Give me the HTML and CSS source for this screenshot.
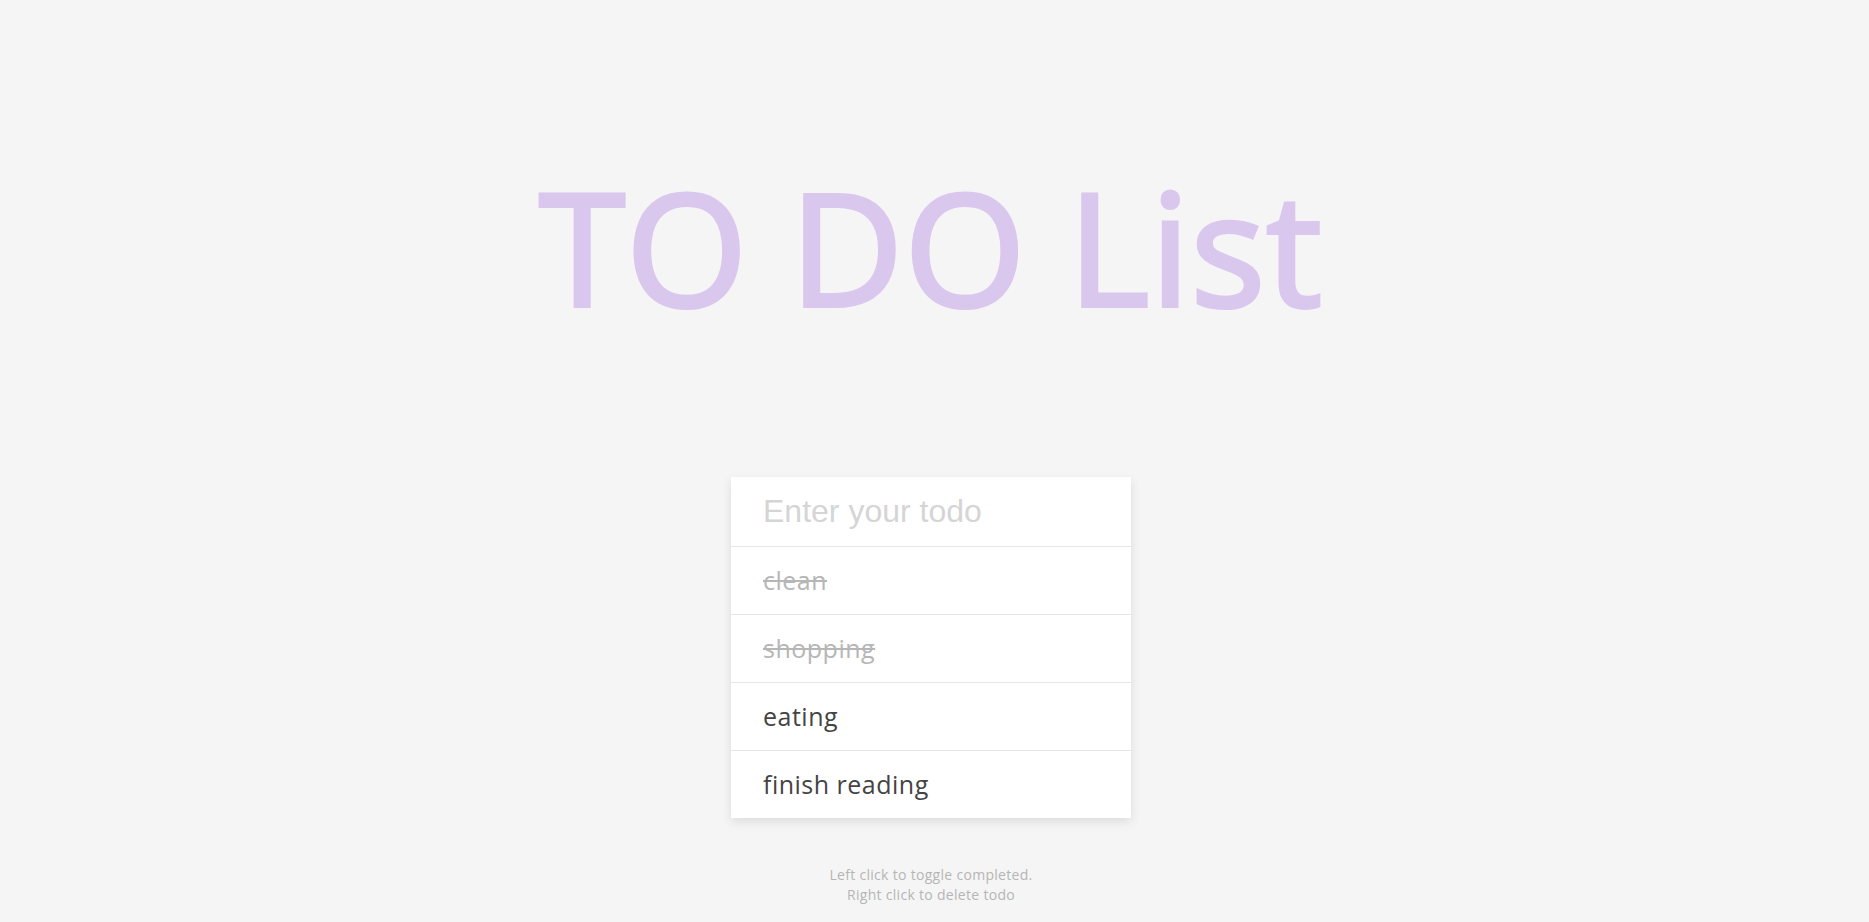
FILE: index.html
```html
<!DOCTYPE html>
<html lang="en">
<head>
<meta charset="UTF-8">
<title>TO DO List</title>
<link rel="stylesheet" href="styles.css">
</head>
<body>
  <h1 class="title">TO DO List</h1>
  <form class="todo-form">
    <input type="text" class="todo-input" placeholder="Enter your todo" autocomplete="off">
    <ul class="todos">
      <li class="todo completed">clean</li>
      <li class="todo completed">shopping</li>
      <li class="todo">eating</li>
      <li class="todo">finish reading</li>
    </ul>
  </form>
  <small class="hint">Left click to toggle completed.<br>Right click to delete todo</small>
</body>
</html>
```
FILE: styles.css
```css
* {
  box-sizing: border-box;
}

html, body {
  margin: 0;
}

body {
  background-color: #f5f5f5;
  color: #444;
  font-family: "Open Sans", "Liberation Sans", sans-serif;
  min-height: 100vh;
  display: flex;
  flex-direction: column;
  align-items: center;
  padding: 163px 7px 0 0;
}

.title {
  margin: 0;
  font-size: 156px;
  line-height: 165px;
  font-weight: 400;
  letter-spacing: 1px;
  color: rgb(179, 131, 226);
  -webkit-text-stroke: 4px rgb(179, 131, 226);
  opacity: 0.4;
  text-align: center;
}

.todo-form {
  margin-top: 149px;
  width: 400px;
  background: #fff;
  box-shadow: 0 4px 10px rgba(0, 0, 0, 0.1);
}

.todo-input {
  display: block;
  width: 100%;
  height: 69px;
  border: none;
  outline: none;
  padding: 0 32px;
  font-family: "Liberation Sans", Arial, sans-serif;
  font-size: 32px;
  color: #444;
  background: #fff;
}

.todo-input::placeholder {
  color: #d5d5d5;
}

.todos {
  list-style: none;
  margin: 0;
  padding: 0;
}

.todo {
  border-top: 1px solid #e5e5e5;
  height: 68px;
  line-height: 67px;
  padding: 0 32px;
  font-size: 25px;
  letter-spacing: 0.5px;
  color: #444;
  cursor: pointer;
}

.todo.completed {
  color: #b6b6b6;
  text-decoration: line-through;
}

.hint {
  display: block;
  margin-top: 47px;
  font-size: 14px;
  letter-spacing: 0.3px;
  line-height: 20px;
  color: #b5b5b5;
  text-align: center;
}
```
